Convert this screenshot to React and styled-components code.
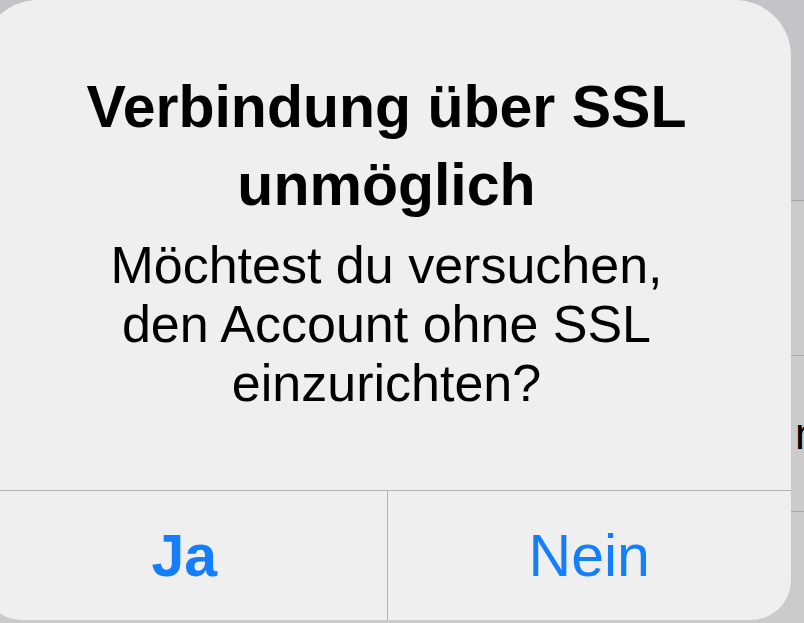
import styled, { createGlobalStyle } from "styled-components"

const GlobalStyle = createGlobalStyle`
body {
  margin: 0;
  background: #cbcbcb;
  overflow: hidden;
  font-family: "Liberation Sans", Arial, sans-serif;
}
`;

const Screen = styled.div`
position: relative;
width: 804px;
height: 623px;
overflow: hidden;
background: #cbcbcb;
`;

const Backdrop = styled.div`
display: flex;
flex-direction: column;
`;

const Header = styled.div`
height: 200px;
background: #c4c4c8;
border-bottom: 1px solid #a3a3a7;
`;

const Row = styled.div`
height: ${props => props.h}px;
display: flex;
align-items: center;
padding-left: 795px;
border-bottom: 1px solid #a9a9a9;
font-size: 44px;
color: #000;
white-space: nowrap;
`;

const Dialog = styled.div`
position: absolute;
left: -18px;
top: 0;
width: 809px;
height: 620px;
background: #efeff0;
border-radius: 56px 56px 40px 40px;
display: flex;
flex-direction: column;
overflow: hidden;
`;

const Content = styled.div`
flex: 1;
padding: 68px 90px 0;
text-align: center;
color: #000;
`;

const Title = styled.h1`
margin: 0;
font-size: 59px;
line-height: 78px;
font-weight: 700;
`;

const Message = styled.p`
margin: 12px 0 0;
font-size: 52px;
line-height: 59px;
font-weight: 400;
`;

const Actions = styled.div`
height: 129px;
display: grid;
grid-template-columns: 1fr 1fr;
border-top: 1px solid #b3b3b7;
`;

const Action = styled.button`
border: none;
background: transparent;
padding: 0;
font-family: inherit;
font-size: 59px;
font-weight: ${props => props.bold ? 700 : 400};
color: #147efb;
display: flex;
align-items: center;
justify-content: center;
border-left: ${props => props.divider ? "1px solid #b3b3b7" : "none"};
cursor: pointer;
`;

const App = () => {
    return (
        <Screen>
            <GlobalStyle />
            <Backdrop>
                <Header />
                <Row h={154} />
                <Row h={155}>n</Row>
            </Backdrop>
            <Dialog>
                <Content>
                    <Title>Verbindung über SSL unmöglich</Title>
                    <Message>Möchtest du versuchen, den Account ohne SSL einzurichten?</Message>
                </Content>
                <Actions>
                    <Action bold>Ja</Action>
                    <Action divider>Nein</Action>
                </Actions>
            </Dialog>
        </Screen>
    )
}

export default App
